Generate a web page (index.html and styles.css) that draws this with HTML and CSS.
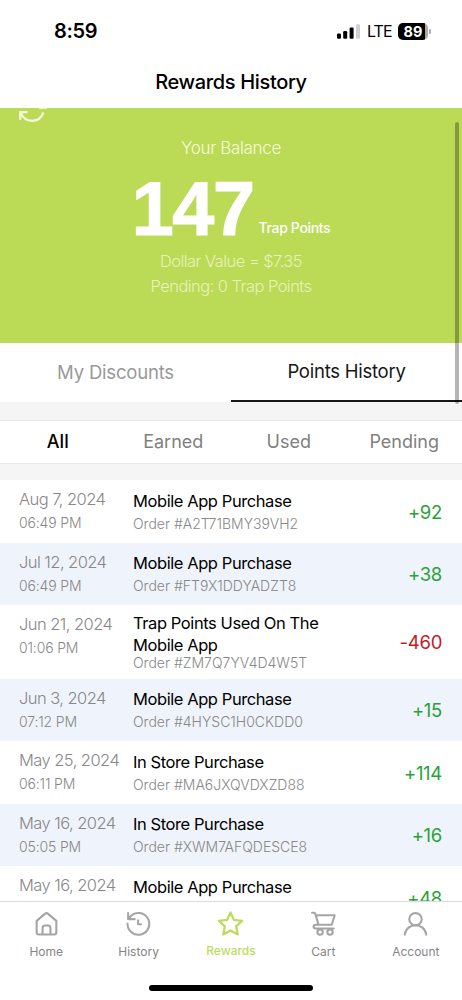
FILE: index.html
```html
<!DOCTYPE html>
<html lang="en">
<head>
<meta charset="utf-8">
<title>Rewards History</title>
<link rel="stylesheet" href="styles.css">
</head>
<body>
<div class="screen">
  <header class="status">
    <span class="clock">8:59</span>
    <div class="indicators">
      <svg class="signal" width="23" height="15" viewBox="0 0 23 15"><rect x="0" y="9.5" width="4" height="5.3" rx="1.2"/><rect x="6.2" y="7" width="4" height="7.8" rx="1.2"/><rect x="12.6" y="3.6" width="4" height="11.2" rx="1.2"/><rect x="19" y="0.3" width="4" height="14.5" rx="1.2" fill="#d0d0d0"/></svg>
      <span class="lte">LTE</span>
      <span class="battery"><span class="level">89</span></span>
    </div>
  </header>
  <h1 class="title">Rewards History</h1>
  <main class="content">
    <section class="balance">
      <svg class="refresh" width="30" height="15" viewBox="0 0 30 15" fill="none" stroke="#f5fadf" stroke-width="2.2"><path d="M2.2 12V4.2H9.5M2.8 4.8C7 15 21 16 25.5 4.5"/><path d="M21 0.4h8" stroke-width="1"/></svg>
      <p class="label">Your Balance</p>
      <div class="amount"><strong>147</strong><span>Trap Points</span></div>
      <p class="sub dollar">Dollar Value = $7.35</p>
      <p class="sub pending">Pending: 0 Trap Points</p>
    </section>
    <nav class="tabs"><span>My Discounts</span><span class="active">Points History</span></nav>
    <nav class="filters"><span class="active all">All</span><span>Earned</span><span class="used">Used</span><span>Pending</span></nav>
    <section class="list">
      <article class="row"><div class="when"><p class="date">Aug 7, 2024</p><p class="time">06:49 PM</p></div><div class="what"><p class="name">Mobile App Purchase</p><p class="order">Order #A2T71BMY39VH2</p></div><b class="points">+92</b></article>
      <article class="row"><div class="when"><p class="date">Jul 12, 2024</p><p class="time">06:49 PM</p></div><div class="what"><p class="name">Mobile App Purchase</p><p class="order">Order #FT9X1DDYADZT8</p></div><b class="points">+38</b></article>
      <article class="row tall"><div class="when"><p class="date">Jun 21, 2024</p><p class="time">01:06 PM</p></div><div class="what"><p class="name">Trap Points Used On The<br>Mobile App</p><p class="order">Order #ZM7Q7YV4D4W5T</p></div><b class="points spent">-460</b></article>
      <article class="row"><div class="when"><p class="date">Jun 3, 2024</p><p class="time">07:12 PM</p></div><div class="what"><p class="name">Mobile App Purchase</p><p class="order">Order #4HYSC1H0CKDD0</p></div><b class="points">+15</b></article>
      <article class="row"><div class="when"><p class="date">May 25, 2024</p><p class="time">06:11 PM</p></div><div class="what"><p class="name">In Store Purchase</p><p class="order">Order #MA6JXQVDXZD88</p></div><b class="points">+114</b></article>
      <article class="row"><div class="when"><p class="date">May 16, 2024</p><p class="time">05:05 PM</p></div><div class="what"><p class="name">In Store Purchase</p><p class="order">Order #XWM7AFQDESCE8</p></div><b class="points">+16</b></article>
      <article class="row"><div class="when"><p class="date">May 16, 2024</p></div><div class="what"><p class="name">Mobile App Purchase</p></div><b class="points">+48</b></article>
    </section>
    <i class="scrollbar"></i>
  </main>
  <footer class="tabbar">
    <a><svg viewBox="0 0 28 28"><path d="M4.5 11.5 12.7 4.5Q14 3.4 15.3 4.5L23.5 11.5V22.5Q23.5 24.7 21.3 24.7H6.7Q4.5 24.7 4.5 22.5ZM10.2 24.5V18.5Q10.2 15.9 12.5 15.9H15.5Q17.8 15.9 17.8 18.5V24.5"/></svg><span>Home</span></a>
    <a><svg viewBox="0 0 28 28"><path d="M3.4 14A10.5 10.5 0 1 0 6.2 7.2L4 9.5M4 3.8V9.8H10.3M13.6 10.8V14.8H16.4"/></svg><span>History</span></a>
    <a class="active"><svg viewBox="0 0 28 28"><path d="m14 3.4 3.3 7.1 7.9 1-5.8 5.2 1.6 7.8L14 20.7l-7 3.8 1.6-7.8-5.8-5.2 7.9-1Z"/></svg><span>Rewards</span></a>
    <a><svg viewBox="0 0 28 28"><path d="M3 3.7H4.8Q5.8 3.7 6.2 5L9.2 15.2H22L24.8 6H6.5M9.2 15.2H6.6Q4.4 15.2 4.4 17T6.6 18.9H23.8"/><circle cx="10.7" cy="22.3" r="2.6"/><circle cx="20.3" cy="22.3" r="2.6"/></svg><span>Cart</span></a>
    <a><svg viewBox="0 0 28 28"><circle cx="14" cy="9.8" r="6"/><path d="M3.6 24.8C5.2 12.6 22.8 12.6 24.4 24.8"/></svg><span>Account</span></a>
    <i class="home-indicator"></i>
  </footer>
</div>
</body>
</html>
```

FILE: styles.css
```css
* { box-sizing: border-box; margin: 0; padding: 0; }
body { font-family: Inter, "Liberation Sans", sans-serif; background: #fff; color: #000; }
.screen { width: 462px; height: 1000px; display: flex; flex-direction: column; overflow: hidden; }
.status { height: 62px; flex: none; display: flex; justify-content: space-between; align-items: center; padding: 0 34px 0 54px; }
.clock { font-size: 20px; font-weight: 600; letter-spacing: -0.3px; }
.indicators { display: flex; align-items: center; }
.lte { font-size: 16px; margin-left: 7px; width: 24px; letter-spacing: -0.9px; }
.battery { position: relative; width: 30px; height: 17px; margin-left: 7px; border-radius: 5px; background: linear-gradient(90deg, #000 27px, #aaa 27px); }
.battery::after { content: ""; position: absolute; left: 31px; top: 6px; width: 1.5px; height: 5px; border-radius: 1px; background: #aaa; }
.level { display: block; color: #fff; font-size: 14.5px; font-weight: 700; line-height: 17px; text-align: center; }
.title { height: 46px; flex: none; font-size: 20px; font-weight: 500; line-height: 41px; text-align: center; letter-spacing: -0.35px; }
.content { position: relative; flex: none; height: 793px; overflow: hidden; }
.balance { position: relative; height: 235px; background: #bbda55; color: #f5fadf; text-align: center; padding-top: 28px; }
.refresh { position: absolute; left: 18px; top: 0; }
.label { font-size: 17px; font-weight: 300; line-height: 24px; letter-spacing: -.35px; }
.amount { display: flex; align-items: flex-start; justify-content: center; height: 88px; padding-top: 5px; }
.amount strong { color: #fff; font-family: "Liberation Sans", sans-serif; font-size: 75.5px; line-height: 88px; letter-spacing: -1.4px; -webkit-text-stroke: 1.2px #fff; }
.amount span { color: #fff; font-size: 14px; font-weight: 500; line-height: 18px; margin: 54px 0 0 5px; letter-spacing: -.35px; }
.sub { color: #e7f2bd; font-size: 16.5px; font-weight: 300; line-height: 25px; letter-spacing: -.55px; padding-top: 1px; height: 25px; }
.tabs { height: 59px; display: grid; grid-template-columns: 1fr 1fr; text-align: center; font-size: 18.5px; line-height: 59px; color: #999; letter-spacing: -.2px; }
.tabs .active { color: #161618; border-bottom: 2px solid #161618; line-height: 57px; letter-spacing: -.25px; }
.filters { height: 78px; display: grid; grid-template-columns: repeat(4, 1fr); text-align: center; font-size: 18px; line-height: 43px; color: #808080; border-top: 18px solid #f5f5f5; border-bottom: 16px solid #f5f5f5; box-shadow: inset 0 1px #e9e9e9, inset 0 -1px #e9e9e9; }
.filters .active { color: #000; font-weight: 450; }
.row { height: 62.5px; display: grid; grid-template-columns: 114px 1fr 70px; padding: 0 20px 0 19px; }
.row:nth-child(even) { background: #eff3fb; }
.row.tall { height: 73.5px; }
.when, .what { white-space: nowrap; color: #888; }
.when { padding-top: 7px; }
.what { padding-top: 9.5px; }
.date { font-size: 16.5px; font-weight: 300; line-height: 24px; letter-spacing: -.55px; }
.time { font-size: 14px; font-weight: 300; line-height: 23.5px; letter-spacing: -.15px; }
.name { color: #000; font-size: 16.5px; line-height: 22px; letter-spacing: -.42px; }
.order { font-size: 14px; font-weight: 300; line-height: 24px; letter-spacing: 0; }
.tall .what { padding-top: 7px; }
.tall .order { line-height: 14px; }
.points { align-self: center; text-align: right; color: #2ba139; font-size: 18.5px; font-weight: 400; letter-spacing: -.3px; padding-top: 1px; }
.points.spent { color: #c81824; }
.scrollbar { position: absolute; right: 3px; top: 14px; width: 4px; height: 282px; border-radius: 2px; background: rgba(0, 0, 0, .29); }
.tabbar { position: relative; height: 99px; border-top: 1px solid #dcdcdc; display: grid; grid-template-columns: repeat(5, 1fr); align-items: start; padding-top: 7px; }
.tabbar a { display: flex; flex-direction: column; align-items: center; color: #858585; font-size: 12px; line-height: 17px; gap: 5px; }
.tabbar svg { width: 29px; height: 29px; fill: none; stroke: #a5a5a5; stroke-width: 2; stroke-linecap: round; stroke-linejoin: round; }
.tabbar .active { color: #bddb5e; font-weight: 500; gap: 4px; }
.tabbar .active svg { stroke: #bddb5e; stroke-width: 2.2; }
.home-indicator { position: absolute; left: 149px; bottom: 9px; width: 164px; height: 6px; border-radius: 3px; background: #000; }
```
